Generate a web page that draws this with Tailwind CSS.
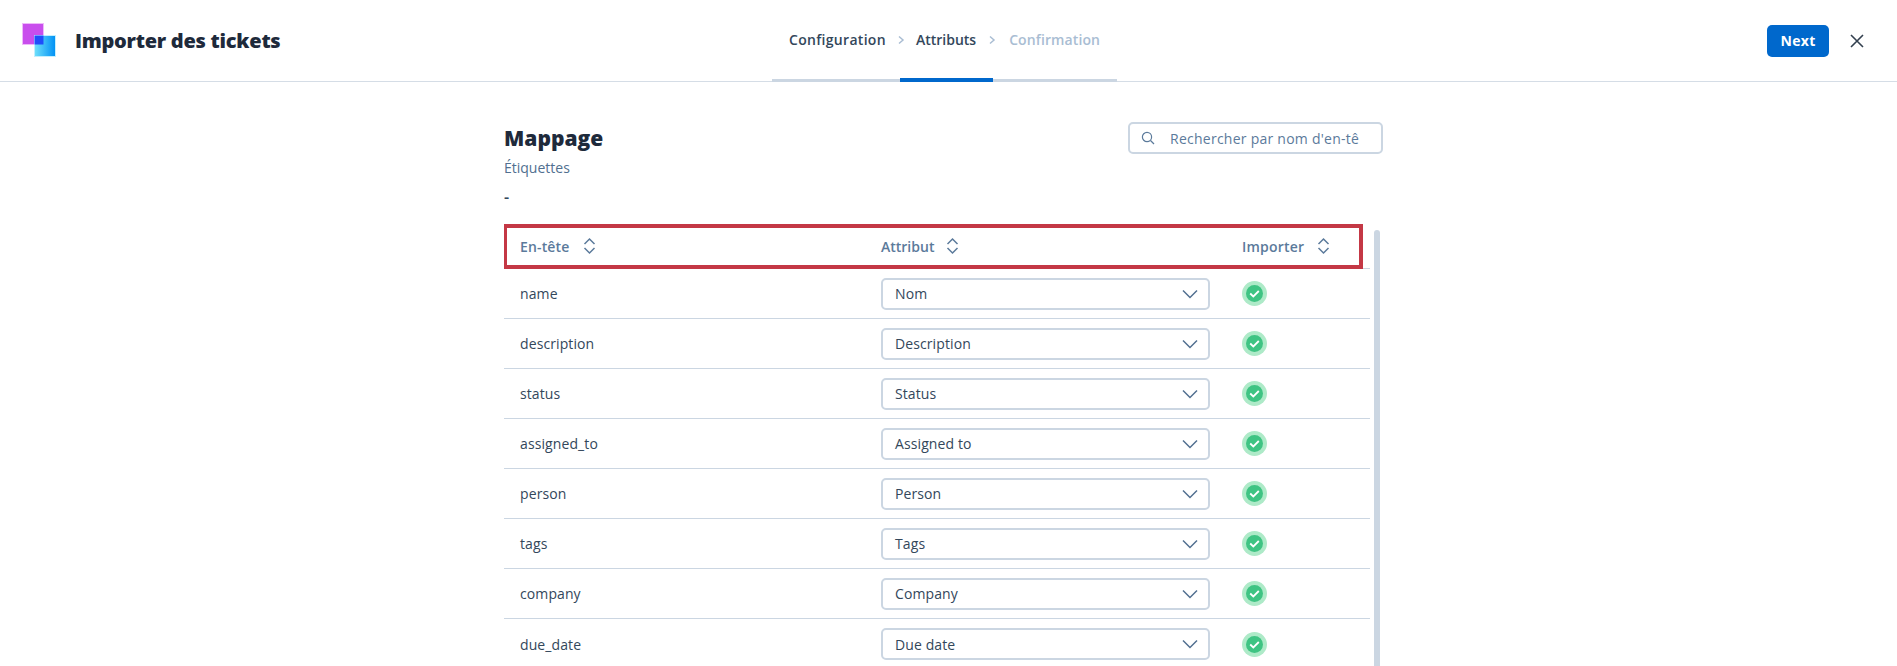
<!DOCTYPE html>
<html lang="fr">
<head>
    <meta charset="UTF-8">
    <title>Importer des tickets</title>
    <script src="https://cdn.jsdelivr.net/npm/@tailwindcss/browser@4"></script>
</head>
<body class="bg-white h-[666px] overflow-hidden font-['Open_Sans',sans-serif] text-[#33475b]">
    <!-- Header -->
    <header class="h-[82px] border-b border-[#d5dde6] flex items-center">
        <div class="flex items-center pl-[22px] w-[772px]">
            <svg width="35" height="35" viewBox="0 0 35 35" class="mt-[-1px]">
                <rect x="0.5" y="0.5" width="21" height="21" fill="#c94eed" stroke="#eeb9fa"/>
                <defs><linearGradient id="g" x1="0" x2="1" y1="0" y2="0"><stop offset="0" stop-color="#6fe0fb"/><stop offset="1" stop-color="#0090f5"/></linearGradient></defs>
                <rect x="12.5" y="12.5" width="21" height="21" fill="url(#g)" stroke="#c4effd"/>
                <rect x="12.5" y="12.5" width="9" height="9" fill="#1f4dfb"/>
            </svg>
            <h1 class="ml-[18px] text-[20px] leading-none font-extrabold tracking-[-0.25px] text-[#1e2a3b]">Importer des tickets</h1>
        </div>
        <nav class="w-[345px] h-full relative flex items-start pt-[30px] text-[14px] leading-5 font-semibold">
            <div class="absolute left-0 right-0 bottom-[-1px] h-[3px] bg-[#cbd6e2]"></div>
            <div class="absolute left-[128px] w-[93px] bottom-[-1px] h-[4px] bg-[#0068cc]"></div>
            <span class="ml-[17px] tracking-[0.3px]">Configuration</span>
            <svg class="mx-[10px] mt-[5px]" width="10" height="10" viewBox="0 0 10 10" fill="none" stroke="#a9bdd3" stroke-width="1.5"><path d="M3 1.5 7 5 3 8.5"/></svg>
            <span>Attributs</span>
            <svg class="ml-[11px] mr-[12px] mt-[5px]" width="10" height="10" viewBox="0 0 10 10" fill="none" stroke="#a9bdd3" stroke-width="1.5"><path d="M3 1.5 7 5 3 8.5"/></svg>
            <span class="text-[#a9bdd3] tracking-[0.1px]">Confirmation</span>
        </nav>
        <div class="flex items-center justify-end flex-1 pr-[33px]">
            <button class="w-[62px] h-[32px] bg-[#0068cc] rounded-[5px] text-white text-[14px] font-bold tracking-[0.3px]">Next</button>
            <svg class="ml-[21px]" width="14" height="14" viewBox="0 0 14 14" fill="none" stroke="#33404f" stroke-width="1.6"><path d="M1 1 13 13M13 1 1 13"/></svg>
        </div>
    </header>

    <main class="w-[880px] h-[584px] overflow-hidden ml-[504px]">
        <div class="flex justify-between items-start">
            <div>
                <h2 class="mt-[42px] text-[21px] leading-7 font-extrabold text-[#1e2a3b]">Mappage</h2>
                <p class="mt-[6px] text-[14px] leading-5 text-[#516f90]">Étiquettes</p>
                <p class="mt-[9px] text-[16px] leading-5 font-semibold">-</p>
            </div>
            <div class="mt-[40px] mr-[1px] w-[255px] h-[32px] border-2 border-[#cbd6e2] rounded-[5px] flex items-center pl-[11px]">
                <svg class="shrink-0" width="14" height="14" viewBox="0 0 14 14" fill="none" stroke="#5b7a9b" stroke-width="1.2"><circle cx="6" cy="6" r="4.6"/><path d="M9.5 9.5 13 13"/></svg>
                <span class="ml-[15px] text-[14px] tracking-[0.25px] text-[#5b7a9b] whitespace-nowrap">Rechercher par nom d'en-tê</span>
            </div>
        </div>

        <div class="flex -ml-[1px] mt-[17px]">
            <div class="w-[867px] relative">
                <div class="absolute left-0 top-0 w-[860px] h-[45px] border-[4px] border-[#c43845]"></div>
                <div class="grid grid-cols-[378px_361px_128px] h-[45px] border-b border-[#cbd6e2] items-center text-[14px] font-semibold text-[#5b7a9b]">
                    <div class="pl-[17px] flex items-center tracking-[0.15px]">En-tête
                        <svg class="ml-[14px]" width="13" height="18" viewBox="0 0 13 18" fill="none" stroke="#5b7a9b" stroke-width="1.5"><path d="M1.5 7 6.5 2 11.5 7M1.5 11 6.5 16 11.5 11"/></svg></div>
                    <div class="flex items-center">Attribut
                        <svg class="ml-[12px]" width="13" height="18" viewBox="0 0 13 18" fill="none" stroke="#5b7a9b" stroke-width="1.5"><path d="M1.5 7 6.5 2 11.5 7M1.5 11 6.5 16 11.5 11"/></svg></div>
                    <div class="flex items-center tracking-[0.2px]">Importer
                        <svg class="ml-[13px]" width="13" height="18" viewBox="0 0 13 18" fill="none" stroke="#5b7a9b" stroke-width="1.5"><path d="M1.5 7 6.5 2 11.5 7M1.5 11 6.5 16 11.5 11"/></svg></div>
                </div>

                <div id="rows">
                    <div class="grid grid-cols-[378px_361px_128px] h-[50px] border-b border-[#cbd6e2] items-center text-[14px] tracking-[0.1px]">
                        <div class="pl-[17px]">name</div>
                        <div class="w-[329px] h-[32px] border-2 border-[#cbd6e2] rounded-[5px] flex items-center justify-between pl-[12px] pr-[10px]"><span>Nom</span>
                            <svg width="16" height="10" viewBox="0 0 16 10" fill="none" stroke="#516f90" stroke-width="1.5"><path d="M1 1.5 8 8.5 15 1.5"/></svg></div>
                        <div><svg class="block" width="25" height="25" viewBox="0 0 25 25"><circle cx="12.5" cy="12.5" r="12.5" fill="#aeeac8"/><circle cx="12.5" cy="12.5" r="8.5" fill="#3fc483"/><path d="M8.2 12.5 11.3 15.5 16.8 10" fill="none" stroke="#fff" stroke-width="1.8"/></svg></div>
                    </div>
                    <div class="grid grid-cols-[378px_361px_128px] h-[50px] border-b border-[#cbd6e2] items-center text-[14px] tracking-[0.1px]">
                        <div class="pl-[17px]">description</div>
                        <div class="w-[329px] h-[32px] border-2 border-[#cbd6e2] rounded-[5px] flex items-center justify-between pl-[12px] pr-[10px]"><span>Description</span>
                            <svg width="16" height="10" viewBox="0 0 16 10" fill="none" stroke="#516f90" stroke-width="1.5"><path d="M1 1.5 8 8.5 15 1.5"/></svg></div>
                        <div><svg class="block" width="25" height="25" viewBox="0 0 25 25"><circle cx="12.5" cy="12.5" r="12.5" fill="#aeeac8"/><circle cx="12.5" cy="12.5" r="8.5" fill="#3fc483"/><path d="M8.2 12.5 11.3 15.5 16.8 10" fill="none" stroke="#fff" stroke-width="1.8"/></svg></div>
                    </div>
                    <div class="grid grid-cols-[378px_361px_128px] h-[50px] border-b border-[#cbd6e2] items-center text-[14px] tracking-[0.1px]">
                        <div class="pl-[17px]">status</div>
                        <div class="w-[329px] h-[32px] border-2 border-[#cbd6e2] rounded-[5px] flex items-center justify-between pl-[12px] pr-[10px]"><span>Status</span>
                            <svg width="16" height="10" viewBox="0 0 16 10" fill="none" stroke="#516f90" stroke-width="1.5"><path d="M1 1.5 8 8.5 15 1.5"/></svg></div>
                        <div><svg class="block" width="25" height="25" viewBox="0 0 25 25"><circle cx="12.5" cy="12.5" r="12.5" fill="#aeeac8"/><circle cx="12.5" cy="12.5" r="8.5" fill="#3fc483"/><path d="M8.2 12.5 11.3 15.5 16.8 10" fill="none" stroke="#fff" stroke-width="1.8"/></svg></div>
                    </div>
                    <div class="grid grid-cols-[378px_361px_128px] h-[50px] border-b border-[#cbd6e2] items-center text-[14px] tracking-[0.1px]">
                        <div class="pl-[17px]">assigned_to</div>
                        <div class="w-[329px] h-[32px] border-2 border-[#cbd6e2] rounded-[5px] flex items-center justify-between pl-[12px] pr-[10px]"><span>Assigned to</span>
                            <svg width="16" height="10" viewBox="0 0 16 10" fill="none" stroke="#516f90" stroke-width="1.5"><path d="M1 1.5 8 8.5 15 1.5"/></svg></div>
                        <div><svg class="block" width="25" height="25" viewBox="0 0 25 25"><circle cx="12.5" cy="12.5" r="12.5" fill="#aeeac8"/><circle cx="12.5" cy="12.5" r="8.5" fill="#3fc483"/><path d="M8.2 12.5 11.3 15.5 16.8 10" fill="none" stroke="#fff" stroke-width="1.8"/></svg></div>
                    </div>
                    <div class="grid grid-cols-[378px_361px_128px] h-[50px] border-b border-[#cbd6e2] items-center text-[14px] tracking-[0.1px]">
                        <div class="pl-[17px]">person</div>
                        <div class="w-[329px] h-[32px] border-2 border-[#cbd6e2] rounded-[5px] flex items-center justify-between pl-[12px] pr-[10px]"><span>Person</span>
                            <svg width="16" height="10" viewBox="0 0 16 10" fill="none" stroke="#516f90" stroke-width="1.5"><path d="M1 1.5 8 8.5 15 1.5"/></svg></div>
                        <div><svg class="block" width="25" height="25" viewBox="0 0 25 25"><circle cx="12.5" cy="12.5" r="12.5" fill="#aeeac8"/><circle cx="12.5" cy="12.5" r="8.5" fill="#3fc483"/><path d="M8.2 12.5 11.3 15.5 16.8 10" fill="none" stroke="#fff" stroke-width="1.8"/></svg></div>
                    </div>
                    <div class="grid grid-cols-[378px_361px_128px] h-[50px] border-b border-[#cbd6e2] items-center text-[14px] tracking-[0.1px]">
                        <div class="pl-[17px]">tags</div>
                        <div class="w-[329px] h-[32px] border-2 border-[#cbd6e2] rounded-[5px] flex items-center justify-between pl-[12px] pr-[10px]"><span>Tags</span>
                            <svg width="16" height="10" viewBox="0 0 16 10" fill="none" stroke="#516f90" stroke-width="1.5"><path d="M1 1.5 8 8.5 15 1.5"/></svg></div>
                        <div><svg class="block" width="25" height="25" viewBox="0 0 25 25"><circle cx="12.5" cy="12.5" r="12.5" fill="#aeeac8"/><circle cx="12.5" cy="12.5" r="8.5" fill="#3fc483"/><path d="M8.2 12.5 11.3 15.5 16.8 10" fill="none" stroke="#fff" stroke-width="1.8"/></svg></div>
                    </div>
                    <div class="grid grid-cols-[378px_361px_128px] h-[50px] border-b border-[#cbd6e2] items-center text-[14px] tracking-[0.1px]">
                        <div class="pl-[17px]">company</div>
                        <div class="w-[329px] h-[32px] border-2 border-[#cbd6e2] rounded-[5px] flex items-center justify-between pl-[12px] pr-[10px]"><span>Company</span>
                            <svg width="16" height="10" viewBox="0 0 16 10" fill="none" stroke="#516f90" stroke-width="1.5"><path d="M1 1.5 8 8.5 15 1.5"/></svg></div>
                        <div><svg class="block" width="25" height="25" viewBox="0 0 25 25"><circle cx="12.5" cy="12.5" r="12.5" fill="#aeeac8"/><circle cx="12.5" cy="12.5" r="8.5" fill="#3fc483"/><path d="M8.2 12.5 11.3 15.5 16.8 10" fill="none" stroke="#fff" stroke-width="1.8"/></svg></div>
                    </div>
                    <div class="grid grid-cols-[378px_361px_128px] h-[50px] items-center text-[14px] tracking-[0.1px]">
                        <div class="pl-[17px]">due_date</div>
                        <div class="w-[329px] h-[32px] border-2 border-[#cbd6e2] rounded-[5px] flex items-center justify-between pl-[12px] pr-[10px]"><span>Due date</span>
                            <svg width="16" height="10" viewBox="0 0 16 10" fill="none" stroke="#516f90" stroke-width="1.5"><path d="M1 1.5 8 8.5 15 1.5"/></svg></div>
                        <div><svg class="block" width="25" height="25" viewBox="0 0 25 25"><circle cx="12.5" cy="12.5" r="12.5" fill="#aeeac8"/><circle cx="12.5" cy="12.5" r="8.5" fill="#3fc483"/><path d="M8.2 12.5 11.3 15.5 16.8 10" fill="none" stroke="#fff" stroke-width="1.8"/></svg></div>
                    </div>
                </div>
            </div>
            <div class="w-[6px] ml-[4px] mt-[6px] h-[500px] bg-[#cbd6e2] rounded-t-full"></div>
        </div>
    </main>
</body>
</html>
